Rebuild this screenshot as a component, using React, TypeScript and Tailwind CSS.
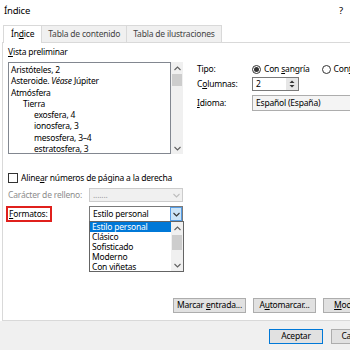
import React from "react";

function ChevronUp() {
  return (
    <svg width="7" height="5" viewBox="0 0 7 5" className="block">
      <path d="M0.5 4 L3.5 1 L6.5 4" fill="none" stroke="#606060" strokeWidth="1.1" />
    </svg>
  );
}

function ChevronDown({ color = "#606060" }: { color?: string }) {
  return (
    <svg width="7" height="5" viewBox="0 0 7 5" className="block">
      <path d="M0.5 1 L3.5 4 L6.5 1" fill="none" stroke={color} strokeWidth="1.1" />
    </svg>
  );
}

function Scrollbar({ thumbTop, thumbHeight }: { thumbTop: string; thumbHeight: string }) {
  return (
    <div className="flex w-[12px] shrink-0 flex-col items-center bg-[#f0f0f0]">
      <div className="flex h-[12px] items-center justify-center">
        <ChevronUp />
      </div>
      <div className={`w-[10px] bg-[#cdcdcd] ${thumbTop} ${thumbHeight}`} />
      <div className="flex-1" />
      <div className="flex h-[12px] items-center justify-center">
        <ChevronDown />
      </div>
    </div>
  );
}

const preview = [
  { text: <>Aristóteles, 2</>, indent: "pl-[2px]" },
  {
    text: (
      <>
        Asteroide. <i>Véase</i> Júpiter
      </>
    ),
    indent: "pl-[2px]",
  },
  { text: <>Atmósfera</>, indent: "pl-[2px]" },
  { text: <>Tierra</>, indent: "pl-[14px]" },
  { text: <>exosfera, 4</>, indent: "pl-[25px]" },
  { text: <>ionosfera, 3</>, indent: "pl-[25px]" },
  { text: <>mesosfera, 3–4</>, indent: "pl-[25px]" },
  { text: <>estratosfera, 3</>, indent: "pl-[25px]" },
];

const formatos = ["Clásico", "Sofisticado", "Moderno", "Con viñetas"];

export default function App() {
  return (
    <div className="flex h-[350px] w-[350px] flex-col overflow-hidden bg-white font-['Noto_Sans',sans-serif] text-[8.5px] tracking-[-0.2px] text-black">
      {/* title bar */}
      <div className="flex h-[22px] shrink-0 items-center justify-between pr-[7px] pl-[4px] text-[9.5px]">
        <span>Índice</span>
        <span>?</span>
      </div>

      {/* tabs */}
      <div className="mt-[3px] flex h-[17px] shrink-0 items-end pl-[3px]">
        <div className="relative z-10 -mb-px flex h-[18px] items-center border-x border-t border-[#d9d9d9] bg-white px-[7px]">
          <span>
            Ín<u>d</u>ice
          </span>
        </div>
        <div className="flex h-[17px] items-center border-t border-r border-[#d9d9d9] bg-[#f0f0f0] px-[6px] text-[#444]">
          Tabla de contenido
        </div>
        <div className="flex h-[17px] items-center border-t border-r border-[#d9d9d9] bg-[#f0f0f0] px-[6px] text-[#444]">
          Tabla de ilustraciones
        </div>
      </div>

      {/* panel */}
      <div className="ml-[2px] flex h-[279px] shrink-0 flex-col border-t border-b border-l border-[#d9d9d9] bg-white">
        <div className="flex pt-[3px] pl-[5px]">
          {/* preview */}
          <div className="w-[175px] shrink-0">
            <div className="mb-[4px] leading-[12px]">
              <u>V</u>ista preliminar
            </div>
            <div className="flex h-[92px]">
              <div className="flex-1 border border-[#828790] pt-[1px] leading-[11.3px]">
                {preview.map((p, i) => (
                  <div key={i} className={`whitespace-nowrap ${p.indent}`}>
                    {p.text}
                  </div>
                ))}
              </div>
              <Scrollbar thumbTop="mt-[0px]" thumbHeight="h-[12px]" />
            </div>
          </div>

          {/* options */}
          <div className="ml-[14px] flex-1 pt-[16px]">
            <div className="flex h-[14px] items-center">
              <span className="w-[55px] shrink-0">Tipo:</span>
              <span className="flex h-[9px] w-[9px] shrink-0 items-center justify-center rounded-full border border-[#333]">
                <span className="h-[5px] w-[5px] rounded-full bg-[#333]" />
              </span>
              <span className="ml-[3px] whitespace-nowrap">
                Con <u>s</u>angría
              </span>
              <span className="ml-[12px] h-[9px] w-[9px] shrink-0 rounded-full border border-[#333]" />
              <span className="ml-[3px] whitespace-nowrap">
                Con<u>t</u>inuo
              </span>
            </div>
            <div className="mt-[1px] flex h-[14px] items-center">
              <span className="w-[55px] shrink-0">
                C<u>o</u>lumnas:
              </span>
              <div className="flex h-[14px] w-[47px] border border-[#7a7a7a]">
                <span className="flex-1 pl-[3px] leading-[12px]">2</span>
                <div className="flex w-[12px] flex-col items-center justify-center bg-[#e6e6e6]">
                  <svg width="6" height="10" viewBox="0 0 6 10" className="block">
                    <path d="M0.5 4 L3 1.5 L5.5 4 Z" fill="#333" />
                    <path d="M0.5 6 L3 8.5 L5.5 6 Z" fill="#333" />
                  </svg>
                </div>
              </div>
            </div>
            <div className="mt-[4px] flex h-[16px] items-center">
              <span className="w-[55px] shrink-0">
                <u>I</u>dioma:
              </span>
              <div className="flex h-[16px] flex-1 items-center border border-[#adadad] bg-[#f4f4f4] pl-[3px] whitespace-nowrap">
                Español (España)
              </div>
            </div>
          </div>
        </div>

        {/* lower options */}
        <div className="mt-[19px] pl-[5px]">
          <div className="flex h-[10px] items-center">
            <span className="h-[10px] w-[10px] shrink-0 border border-[#333]" />
            <span className="ml-[3px] whitespace-nowrap">
              Aline<u>a</u>r números de página a la derecha
            </span>
          </div>
          <div className="mt-[5px] flex h-[14px] items-center">
            <span className="w-[81px] shrink-0 text-[#8d8d8d]">Carácter de relleno:</span>
            <div className="flex h-[14px] w-[94px] items-center border border-[#cccccc] bg-[#f0f0f0]">
              <span className="flex-1 pl-[3px] text-[#9a9a9a]">.......</span>
              <span className="flex w-[12px] items-center justify-center">
                <ChevronDown color="#bdbdbd" />
              </span>
            </div>
          </div>
          <div className="mt-[4px] flex h-[16px] items-center">
            <span className="-ml-[2px] flex h-[16px] w-[46px] shrink-0 items-center border-2 border-[#e0201c] pl-[1px]">
              <span>
                <u>F</u>ormatos:
              </span>
            </span>
            <span className="w-[37px] shrink-0" />
            <div className="relative flex h-[16px] w-[94px] items-center border border-[#7a7a7a]">
              <span className="flex-1 pl-[3px]">Estilo personal</span>
              <span className="flex h-[14px] w-[12px] items-center justify-center border border-[#569de5] bg-[#cce4f7]">
                <ChevronDown color="#333" />
              </span>
              {/* open drop-down list */}
              <div className="absolute top-full -left-px z-20 flex h-[51px] w-[95px] border border-[#646464] bg-white">
                <div className="flex-1 leading-[10px]">
                  <div className="bg-[#0078d7] pl-[2px] text-white">Estilo personal</div>
                  {formatos.map((f) => (
                    <div key={f} className="pl-[2px]">
                      {f}
                    </div>
                  ))}
                </div>
                <Scrollbar thumbTop="mt-[1px]" thumbHeight="h-[15px]" />
              </div>
            </div>
          </div>
        </div>

        {/* panel buttons */}
        <div className="mt-auto mb-[7px] flex gap-[7px] pl-[170px] whitespace-nowrap">
          <div className="flex h-[15px] w-[73px] shrink-0 items-center justify-center border border-[#adadad] bg-[#e1e1e1]">
            <span>
              Marcar <u>e</u>ntrada...
            </span>
          </div>
          <div className="flex h-[15px] w-[63px] shrink-0 items-center justify-center border border-[#adadad] bg-[#e1e1e1]">
            <span>
              A<u>u</u>tomarcar...
            </span>
          </div>
          <div className="flex h-[15px] w-[63px] shrink-0 items-center justify-center border border-[#adadad] bg-[#e1e1e1]">
            <span>
              <u>M</u>odificar...
            </span>
          </div>
        </div>
      </div>

      {/* dialog buttons */}
      <div className="flex flex-1 gap-[8px] bg-[#f0f0f0] pt-[8px] pl-[269px] whitespace-nowrap">
        <div className="flex h-[15px] w-[54px] shrink-0 items-center justify-center border border-[#0078d7] bg-[#e1e1e1]">
          Aceptar
        </div>
        <div className="flex h-[15px] w-[54px] shrink-0 items-center justify-center border border-[#adadad] bg-[#e1e1e1]">
          Cancelar
        </div>
      </div>
    </div>
  );
}
